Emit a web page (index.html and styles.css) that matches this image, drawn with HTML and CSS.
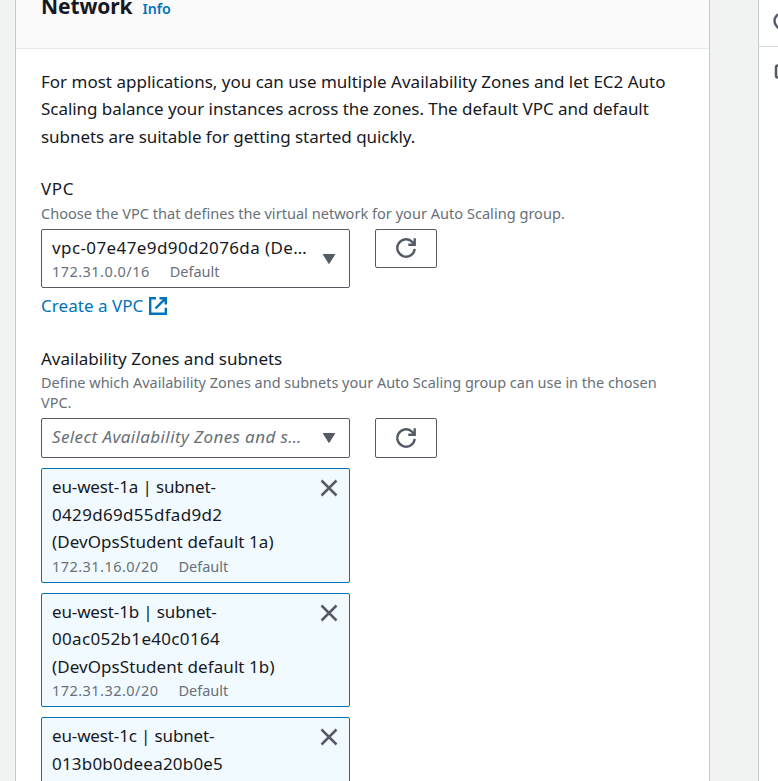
FILE: index.html
```html
<!DOCTYPE html>
<html lang="en">
<head>
<meta charset="utf-8">
<title>Network</title>
<link rel="stylesheet" href="styles.css">
</head>
<body>
<div class="page">
  <main class="panel">
    <header class="panel-header"><h2 class="title">Network</h2><a class="info">Info</a></header>
    <div class="content">
      <p class="intro"><span class="i1">For most applications, you can use multiple Availability Zones and let EC2 Auto</span><br><span class="i2">Scaling balance your instances across the zones. The default VPC and default</span><br><span class="i3">subnets are suitable for getting started quickly.</span></p>
      <section class="field vpc">
        <h3 class="label"><span class="l1">VPC</span></h3>
        <p class="hint">Choose the VPC that defines the virtual network for your Auto Scaling group.</p>
        <div class="row">
          <div class="select tall">
            <div><div class="value"><span class="v1">vpc-07e47e9d90d2076da (De…</span></div><div class="tags"><span class="cidr">172.31.0.0/16</span><span>Default</span></div></div>
            <svg class="caret" viewBox="0 0 14 12"><path d="M1.3 1.5h11.4L7 10.5z"/></svg>
          </div>
          <button class="refresh" aria-label="Refresh"><svg viewBox="0 0 22 22"><path d="M19.7 11.8A8.7 8.7 0 1 1 16.6 4.3L19 6.6"/><path d="M19.7 1.2v6.6h-6.4"/></svg></button>
        </div>
        <a class="link"><span class="k1">Create a VPC</span><svg viewBox="0 0 18 18"><path d="M7 1.2H1.2v15.6h15.6v-6M10.5 1.2h6.3v6.3M16.8 1.2L6.5 11.5"/></svg></a>
      </section>
      <section class="field zones">
        <h3 class="label"><span class="l2">Availability Zones and subnets</span></h3>
        <p class="hint wide">Define which Availability Zones and subnets your Auto Scaling group can use in the chosen<br>VPC.</p>
        <div class="row">
          <div class="select short">
            <div class="placeholder"><span class="p1">Select Availability Zones and s…</span></div>
            <svg class="caret" viewBox="0 0 14 12"><path d="M1.3 1.5h11.4L7 10.5z"/></svg>
          </div>
          <button class="refresh" aria-label="Refresh"><svg viewBox="0 0 22 22"><path d="M19.7 11.8A8.7 8.7 0 1 1 16.6 4.3L19 6.6"/><path d="M19.7 1.2v6.6h-6.4"/></svg></button>
        </div>
        <div class="tokens">
          <div class="token">
            <div><div class="value"><span class="t1">eu-west-1a | subnet-</span><br><span class="t2">0429d69d55dfad9d2</span><br><span class="t3">(DevOpsStudent default 1a)</span></div><div class="tags"><span class="cidr">172.31.16.0/20</span><span>Default</span></div></div>
            <svg class="close" viewBox="0 0 18 18"><path d="M1.5 1.5l15 15M16.5 1.5l-15 15"/></svg>
          </div>
          <div class="token">
            <div><div class="value"><span class="t1">eu-west-1b | subnet-</span><br><span class="t2">00ac052b1e40c0164</span><br><span class="t3">(DevOpsStudent default 1b)</span></div><div class="tags"><span class="cidr">172.31.32.0/20</span><span>Default</span></div></div>
            <svg class="close" viewBox="0 0 18 18"><path d="M1.5 1.5l15 15M16.5 1.5l-15 15"/></svg>
          </div>
          <div class="token">
            <div><div class="value"><span class="t1">eu-west-1c | subnet-</span><br><span class="t2 narrow">013b0b0deea20b0e5</span></div></div>
            <svg class="close" viewBox="0 0 18 18"><path d="M1.5 1.5l15 15M16.5 1.5l-15 15"/></svg>
          </div>
        </div>
      </section>
    </div>
  </main>
  <aside class="side">
    <div class="side-top"><svg viewBox="0 0 20 20"><circle cx="10" cy="10" r="7.5"/></svg></div>
    <div class="side-body"><svg viewBox="0 0 20 20"><rect x="2" y="3.5" width="16" height="12" rx="2"/></svg></div>
  </aside>
</div>
</body>
</html>
```

FILE: styles.css
```css
* { box-sizing: border-box; }
body { margin: 0; height: 781px; overflow: hidden; background: #f1f3f3; color: #16191f; font: 17px/27.5px "Noto Sans", sans-serif; }
h2, h3, p { margin: 0; font-weight: 400; font-size: inherit; }
.page { display: flex; height: 781px; overflow: hidden; }
.panel { flex: none; width: 695px; height: 900px; margin-left: 15px; background: #fff; border: solid #c3cacb; border-width: 0 1px; }
.panel-header { display: flex; align-items: baseline; gap: 10px; height: 49px; padding-left: 25px; background: #fafafa; border-bottom: 1px solid #e5eaea; white-space: nowrap; }
.title { margin-top: -10px; font-size: 21px; line-height: 28px; font-weight: 700; letter-spacing: -0.1px; }
.info { margin-top: -1px; color: #0073bb; font-size: 14.2px; font-weight: 600; line-height: 20px; }
.content { padding: 18.5px 25px 0; white-space: nowrap; }
.intro { height: 82.5px; }
.i2 { letter-spacing: -0.05px; }
.i3 { letter-spacing: -0.04px; }
.vpc { margin-top: 25px; }
.label { height: 27px; }
.l1 { letter-spacing: 0.6px; }
.v1 { letter-spacing: 0.4px; }
.p1 { letter-spacing: 0.39px; }
.k1 { letter-spacing: 0.04px; }
.t1 { letter-spacing: -0.14px; }
.t2 { letter-spacing: 0.32px; }
.t2.narrow { letter-spacing: 0.2px; }
.t3 { letter-spacing: 0.08px; }
.cidr { letter-spacing: 0.46px; }
.hint { color: #687078; font-size: 14.58px; line-height: 20px; }
.hint.wide { font-size: 14.48px; }
.vpc .hint { padding: 1px 0 6px; }
.zones { margin-top: 26px; }
.zones .hint { padding: 1px 0 5px; }
.row { display: flex; align-items: flex-start; gap: 25px; }
.select, .token { display: flex; justify-content: space-between; width: 309px; padding: 0 13px 0 10px; border: 1px solid #545b64; border-radius: 2px; }
.select { align-items: center; }
.select > div { height: 100%; }
.tall { height: 59px; padding-top: 4px; }
.tall .caret { margin-top: -4px; }
.short { height: 40px; padding-top: 4px; }
.short .caret { margin-top: -4px; }
.caret { flex: none; width: 14px; height: 12px; fill: #545b64; stroke: #545b64; stroke-linejoin: round; }
.tags { display: flex; gap: 20px; color: #687078; font-size: 14.5px; line-height: 20px; }
.tall .tags { margin-top: -1px; }
.placeholder { color: #687078; font-style: italic; }
.refresh { display: flex; align-items: center; justify-content: center; width: 62px; height: 39px; padding: 0 0 1px; background: #fff; border: 1px solid #545b64; border-radius: 2px; }
.zones .refresh { height: 40px; }
.refresh svg { width: 22px; height: 22px; fill: none; stroke: #545b64; stroke-width: 2.4; }
.link { display: flex; align-items: center; gap: 6px; height: 27px; margin: 4px 0 1px; color: #0073bb; }
.link svg { width: 18px; height: 18px; fill: none; stroke: currentColor; stroke-width: 2.4; }
.tokens { display: grid; gap: 10px; margin-top: 10px; }
.token { height: 114.5px; padding-top: 4px; background: #f1faff; border-color: #0073bb; }
.close { flex: none; width: 18px; height: 18px; margin: 6px -2px 0 0; fill: none; stroke: #545b64; stroke-width: 2.5; }
.side { flex: none; width: 300px; height: 900px; margin-left: 48px; background: #fff; border-left: 1px solid #c3cacb; }
.side svg { display: block; width: 20px; height: 20px; fill: none; stroke: #545b64; stroke-width: 2.5; }
.side-top { height: 47px; padding: 11px 0 0 13px; border-bottom: 1px solid #d5dbdb; }
.side-body { padding: 15px 0 0 15px; }
```
